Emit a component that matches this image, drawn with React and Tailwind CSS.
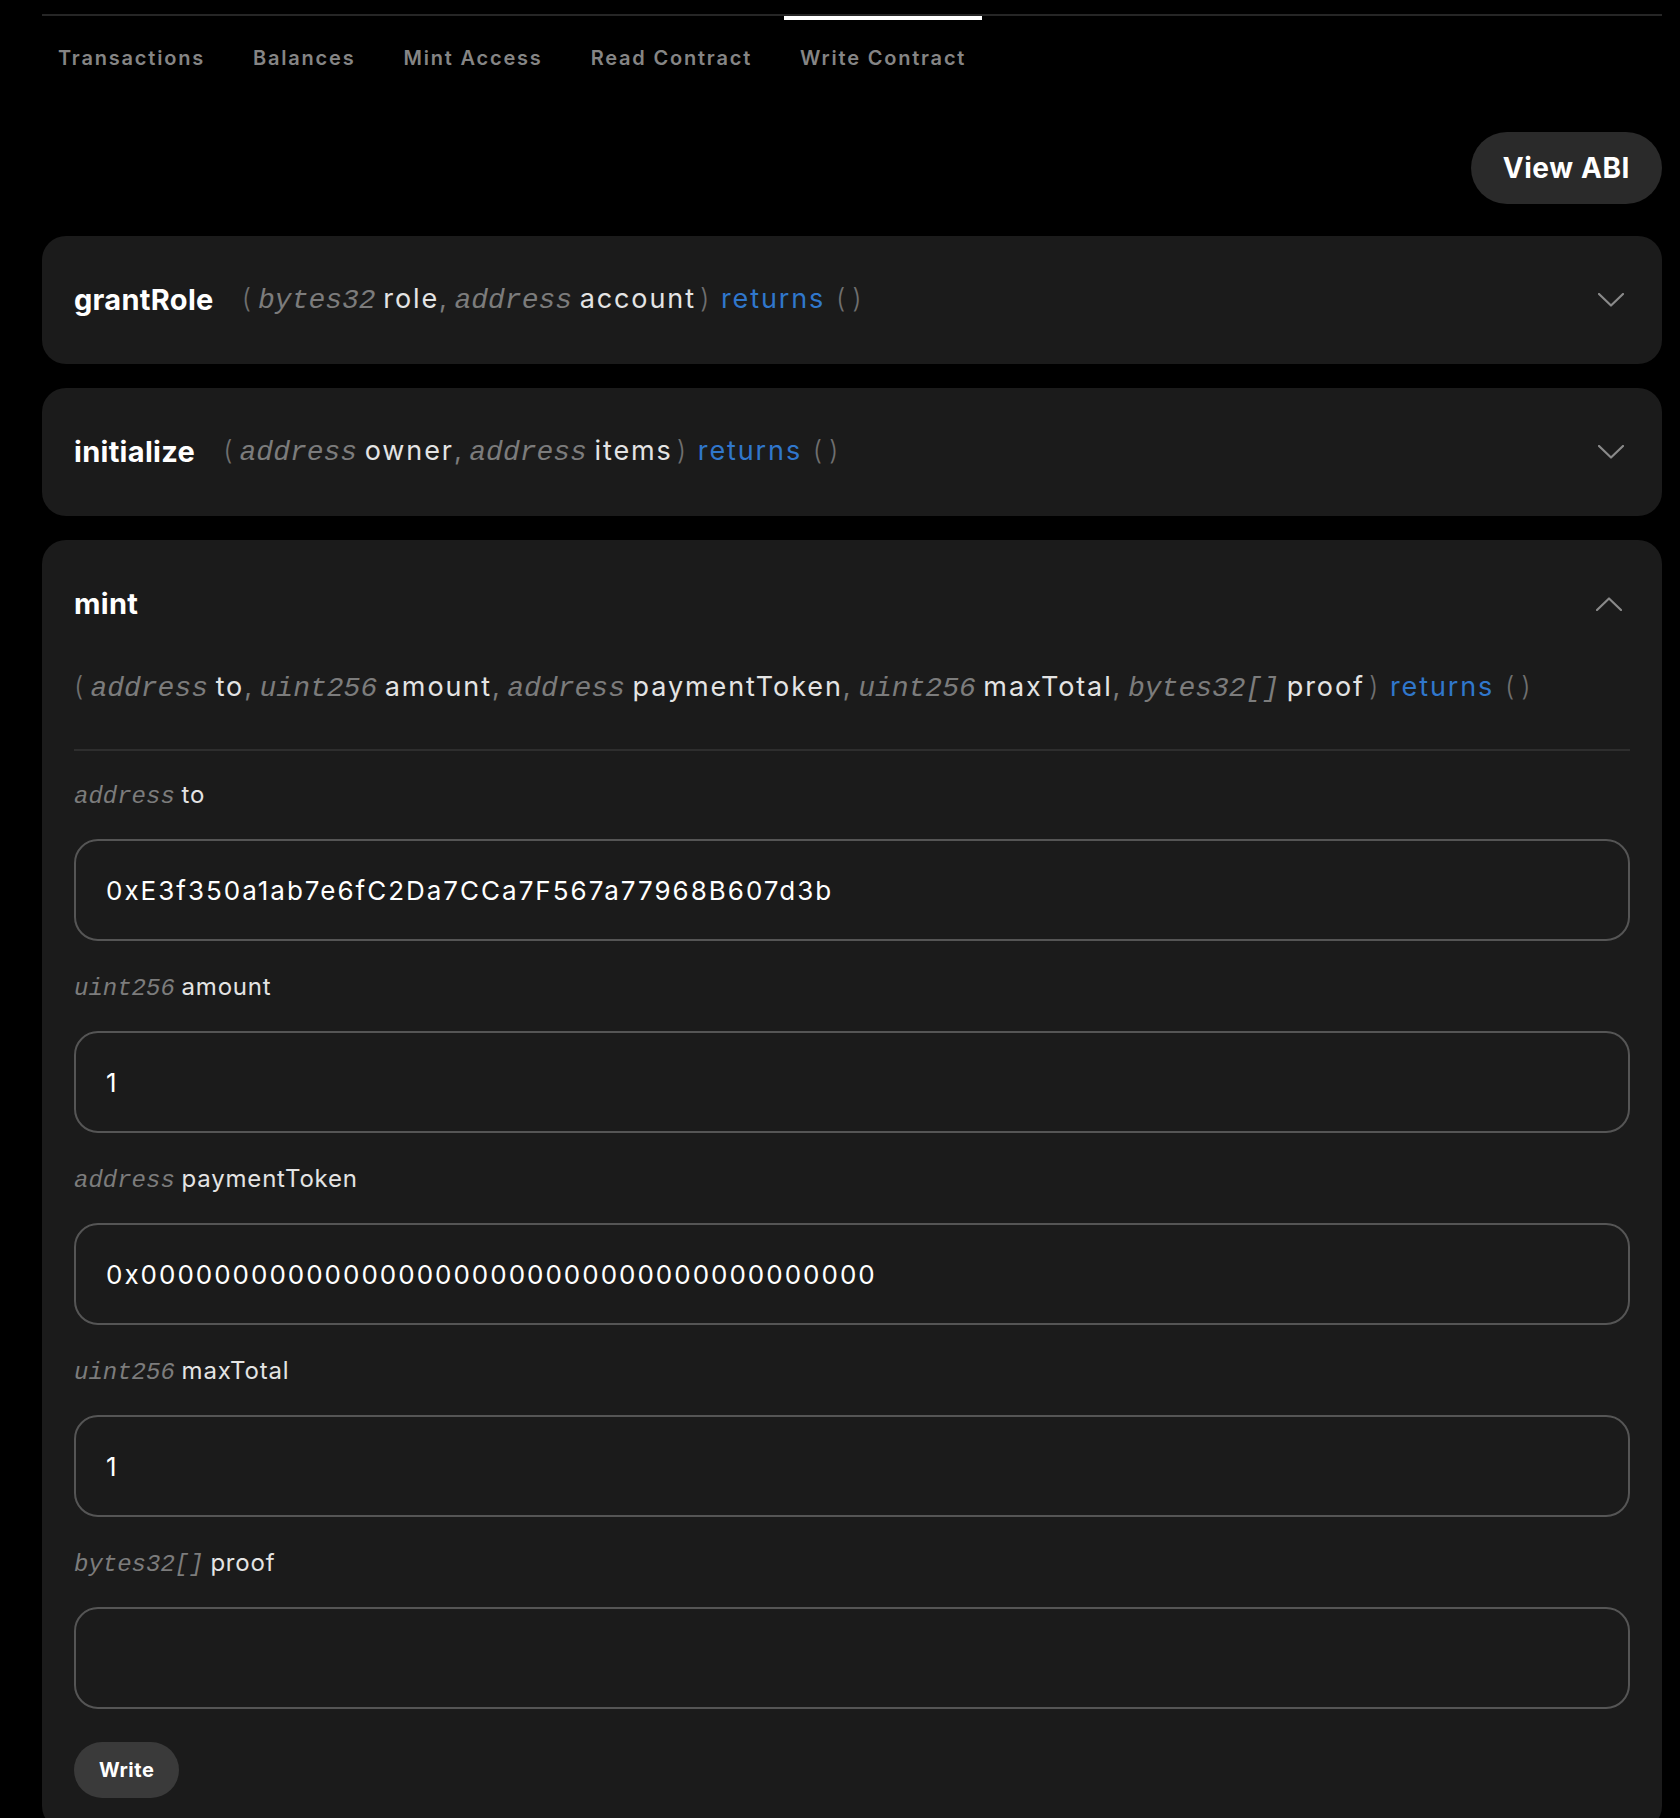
import React from "react";

const sans = { fontFamily: "Inter, 'Noto Sans', sans-serif" };
const mono = { fontFamily: "'Liberation Mono', 'DejaVu Sans Mono', monospace" };

const tabs = ["Transactions", "Balances", "Mint Access", "Read Contract", "Write Contract"];

const mintInputs = [
  { type: "address", name: "to", value: "0xE3f350a1ab7e6fC2Da7CCa7F567a77968B607d3b" },
  { type: "uint256", name: "amount", value: "1" },
  { type: "address", name: "paymentToken", value: "0x0000000000000000000000000000000000000000" },
  { type: "uint256", name: "maxTotal", value: "1" },
  { type: "bytes32[]", name: "proof", value: "" },
];

const Chevron = ({ up }) => (
  <svg width="26" height="14" viewBox="0 0 26 14" fill="none" className="shrink-0">
    <path
      d={up ? "M1 13 L13 1.5 L25 13" : "M1 1 L13 12.5 L25 1"}
      stroke="#8a8a8a"
      strokeWidth="2.2"
      strokeLinecap="round"
      strokeLinejoin="round"
    />
  </svg>
);

// (type name, type name) returns ()
const Signature = ({ params }) => (
  <span className="whitespace-nowrap">
    <span className="text-[#6f6f6f] font-light mr-[7px]">(</span>
    {params.map((p, i) => (
      <span key={p.name}>
        <span className="italic text-[#7c7c7c] text-[28px]" style={mono}>
          {p.type}
        </span>{" "}
        <span className="text-[#e4e4e4] tracking-[1.9px]">{p.name}</span>
        {i < params.length - 1 && <span className="text-[#7c7c7c]">, </span>}
      </span>
    ))}
    <span className="text-[#6f6f6f] font-light ml-[4px] mr-[4px]">)</span>{" "}
    <span className="text-[#3077cc] tracking-[1.9px]">returns</span>{" "}
    <span className="text-[#6f6f6f] font-light tracking-[7px] ml-[3px]">()</span>
  </span>
);

const CollapsedCard = ({ name, params }) => (
  <div className="h-[128px] rounded-3xl bg-[#1b1b1b] px-8 flex items-center justify-between">
    <div className="flex items-center text-[27px] leading-[40px]">
      <span className="font-bold text-white text-[29px] tracking-[0.3px]">{name}</span>
      <span className="ml-[28px]">
        <Signature params={params} />
      </span>
    </div>
    <div className="mr-[6px]">
      <Chevron />
    </div>
  </div>
);

export default function App() {
  return (
    <div className="min-h-screen bg-black pl-[42px] pr-[18px] pt-[14px]" style={sans}>
      <div className="border-t-2 border-[#262626]">
        <div className="flex gap-4">
          {tabs.map((t) => (
            <div
              key={t}
              className={
                "h-[80px] px-4 flex items-center border-t-4 text-[20px] font-semibold tracking-[1.8px] text-[#858585] " +
                (t === "Write Contract" ? "border-white" : "border-transparent")
              }
            >
              {t}
            </div>
          ))}
        </div>
      </div>

      <div className="flex justify-end mt-[36px]">
        <button className="h-[72px] px-[32px] rounded-full bg-[#2a2a2a] text-white text-[28px] font-bold tracking-[0.6px]">
          View ABI
        </button>
      </div>

      <div className="mt-[32px] flex flex-col gap-6">
        <CollapsedCard
          name="grantRole"
          params={[
            { type: "bytes32", name: "role" },
            { type: "address", name: "account" },
          ]}
        />
        <CollapsedCard
          name="initialize"
          params={[
            { type: "address", name: "owner" },
            { type: "address", name: "items" },
          ]}
        />

        <div className="rounded-3xl bg-[#1b1b1b] px-8 pb-8">
          <div className="h-[128px] flex items-center justify-between">
            <span className="font-bold text-white text-[29px] tracking-[0.3px]">mint</span>
            <div className="mr-[8px]">
              <Chevron up />
            </div>
          </div>
          <div className="h-[44px] text-[27px] leading-[38px] overflow-visible">
            <Signature params={mintInputs} />
          </div>
          <div className="mt-[37px] h-[2px] bg-[#2e2e2e]" />

          <div className="mt-[26px] flex flex-col gap-[28px]">
            {mintInputs.map((f) => (
              <div key={f.name} className="flex flex-col">
                <label className="h-[32px] text-[24px] leading-[36px] whitespace-nowrap">
                  <span className="italic text-[#7c7c7c]" style={mono}>
                    {f.type}
                  </span>{" "}
                  <span className="text-[#e4e4e4] tracking-[0.8px]">{f.name}</span>
                </label>
                <input
                  readOnly
                  value={f.value}
                  className="mt-[30px] h-[102px] w-full rounded-[24px] border-2 border-[#555555] bg-transparent px-[30px] text-[26px] tracking-[2px] text-white outline-none"
                  style={sans}
                />
              </div>
            ))}
          </div>

          <button className="mt-[33px] h-[56px] px-[25px] rounded-full bg-[#3a3a3a] text-white text-[20px] font-bold tracking-[0.5px]">
            Write
          </button>
        </div>
      </div>
    </div>
  );
}
